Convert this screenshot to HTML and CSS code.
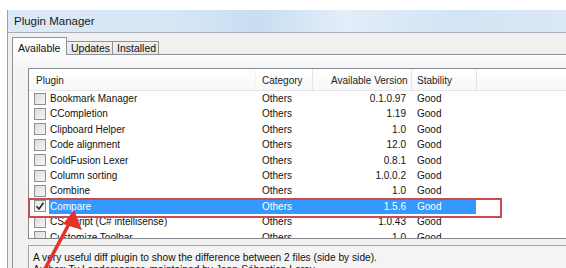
FILE: index.html
```html
<!DOCTYPE html>
<html>
<head>
<meta charset="utf-8">
<link rel="stylesheet" href="styles.css">
</head>
<body>
<div class="window">
  <div class="titlebar">Plugin Manager</div>
  <div class="body">
    <div class="tabs">
      <div class="tab active">Available</div>
      <div class="tab">Updates</div>
      <div class="tab">Installed</div>
    </div>
    <div class="panel">
      <div class="list">
        <div class="head">
          <div class="h h1">Plugin</div>
          <div class="h h2">Category</div>
          <div class="h h3">Available Version</div>
          <div class="h h4">Stability</div>
        </div>
        <div class="row"><span class="cb"></span><div class="cells"><span class="c1">Bookmark Manager</span><span class="c2">Others</span><span class="c3">0.1.0.97</span><span class="c4">Good</span></div></div>
        <div class="row"><span class="cb"></span><div class="cells"><span class="c1">CCompletion</span><span class="c2">Others</span><span class="c3">1.19</span><span class="c4">Good</span></div></div>
        <div class="row"><span class="cb"></span><div class="cells"><span class="c1">Clipboard Helper</span><span class="c2">Others</span><span class="c3">1.0</span><span class="c4">Good</span></div></div>
        <div class="row"><span class="cb"></span><div class="cells"><span class="c1">Code alignment</span><span class="c2">Others</span><span class="c3">12.0</span><span class="c4">Good</span></div></div>
        <div class="row"><span class="cb"></span><div class="cells"><span class="c1">ColdFusion Lexer</span><span class="c2">Others</span><span class="c3">0.8.1</span><span class="c4">Good</span></div></div>
        <div class="row"><span class="cb"></span><div class="cells"><span class="c1">Column sorting</span><span class="c2">Others</span><span class="c3">1.0.0.2</span><span class="c4">Good</span></div></div>
        <div class="row"><span class="cb"></span><div class="cells"><span class="c1">Combine</span><span class="c2">Others</span><span class="c3">1.0</span><span class="c4">Good</span></div></div>
        <div class="row sel"><span class="cb checked"><svg viewBox="0 0 12 12" width="12" height="12"><path d="M2.5 6.2 L5 9 L9.5 2.8" fill="none" stroke="#222" stroke-width="1.5"/></svg></span><div class="cells"><span class="c1">Compare</span><span class="c2">Others</span><span class="c3">1.5.6</span><span class="c4">Good</span></div></div>
        <div class="row"><span class="cb"></span><div class="cells"><span class="c1">CS-Script (C# intellisense)</span><span class="c2">Others</span><span class="c3">1.0.43</span><span class="c4">Good</span></div></div>
        <div class="row"><span class="cb"></span><div class="cells"><span class="c1">Customize Toolbar</span><span class="c2">Others</span><span class="c3">1.0</span><span class="c4">Good</span></div></div>
      </div>
      <div class="desc">A very useful diff plugin to show the difference between 2 files (side by side).<br>Author: Ty Landercasper, maintained by Jean-Sébastien Leroy</div>
    </div>
  </div>
  <div class="redbox"></div>
  <svg class="arrow" width="100" height="80" viewBox="0 0 100 80">
    <line x1="38" y1="80" x2="68" y2="24" stroke="#e8302a" stroke-width="3.5"/>
    <polygon points="73,10 81,30 62,24" fill="#e8302a"/>
  </svg>
</div>
</body>
</html>
```
FILE: styles.css
```css
html, body {
  margin: 0;
  padding: 0;
  background: #ffffff;
  overflow: hidden;
}
body {
  width: 566px;
  height: 268px;
  font-family: "Liberation Sans", Arial, sans-serif;
  font-size: 10px;
  color: #111;
}
.window {
  position: relative;
  margin-top: 10px;
  margin-left: 7px;
  height: 258px;
  width: 559px;
  border-left: 1px solid #9aa0a8;
  background: #f0f0f0;
  overflow: hidden;
}
.titlebar {
  height: 23px;
  box-sizing: border-box;
  padding-left: 6px;
  line-height: 23px;
  font-size: 11.5px;
  color: #1a1a1a;
  background: linear-gradient(90deg, #dce9f6 0%, #d6e6f5 30%, #c9ddf1 45%, #e2eef9 60%, #d3e4f4 80%, #dbe8f5 100%);
  border-bottom: 1px solid #a7b0ba;
}
.body {
  padding: 4px 0 0 4px;
}
.tabs {
  display: flex;
  align-items: flex-end;
  height: 17px;
  position: relative;
  z-index: 2;
}
.tab {
  height: 13px;
  box-sizing: border-box;
  border: 1px solid #8e9399;
  border-bottom: none;
  border-left: none;
  background: linear-gradient(#f2f2f2, #e4e4e4);
  line-height: 12px;
  padding: 0 0 0 4px;
  font-size: 10.5px;
}
.tab.active {
  height: 18px;
  margin-bottom: -1px;
  border-left: 1px solid #8e9399;
  background: #fcfcfc;
  width: 55px;
  padding: 4px 0 0 5px;
  line-height: 12px;
}
.tabs .tab:nth-child(2) { width: 46px; }
.tabs .tab:nth-child(3) { width: 46px; }
.panel {
  border-top: 1px solid #8e9399;
  border-left: 1px solid #8e9399;
  background: linear-gradient(#fbfbfb, #f3f3f3 20px, #f0f0f0);
  padding: 13px 0 0 15px;
  height: 220px;
  box-sizing: border-box;
}
.list {
  width: 620px;
  height: 171px;
  box-sizing: border-box;
  border: 1px solid #828790;
  background: #ffffff;
  overflow: hidden;
}
.head {
  display: flex;
  height: 22px;
  box-sizing: border-box;
  border-bottom: 1px solid #e5e5e5;
  background: linear-gradient(#ffffff, #f7f8f9);
  color: #222;
}
.h {
  box-sizing: border-box;
  line-height: 21px;
  padding-top: 1px;
  white-space: nowrap;
  overflow: hidden;
  border-right: 1px solid #e3e5e8;
}
.h1 { width: 227px; padding-left: 7px; border-right-color: #f4f5f6; }
.h2 { width: 57px; padding-left: 6px; }
.h3 { width: 99px; padding-left: 18px; }
.h4 { width: 65px; padding-left: 5px; }
.row {
  display: flex;
  align-items: center;
  height: 15.4px;
}
.cb {
  width: 12px;
  height: 12px;
  box-sizing: border-box;
  margin-left: 5px;
  margin-right: 3px;
  border: 1px solid #8f9091;
  background: linear-gradient(135deg, #dcdcdc, #f6f6f6);
  display: flex;
  flex: none;
}
.cb.checked { background: linear-gradient(135deg, #e6e6e6, #fbfbfb); }
.cb svg { display: block; margin: -1px; }
.cells {
  display: flex;
  align-items: center;
  height: 15.4px;
}
.cells span { display: block; line-height: 15.4px; white-space: nowrap; }
.c1 { width: 206px; padding-left: 1px; }
.c2 { width: 57px; padding-left: 6px; box-sizing: border-box; }
.c3 { width: 99px; padding-right: 6px; box-sizing: border-box; text-align: right; }
.c4 { width: 64px; padding-left: 5px; box-sizing: border-box; }
.row.sel .cells {
  background: #3399ff;
  color: #ffffff;
}
.desc {
  margin-top: 6px;
  width: 620px;
  height: 40px;
  box-sizing: border-box;
  border-top: 1px solid #a0a4a8;
  border-left: 1px solid #a0a4a8;
  background: #f4f4f4;
  padding: 6px 0 0 4px;
  line-height: 12px;
  font-size: 10.2px;
  color: #111;
}
.redbox {
  position: absolute;
  left: 20px;
  top: 188px;
  width: 474px;
  height: 20px;
  box-sizing: border-box;
  border: 2px solid #cc4a56;
}
.arrow {
  position: absolute;
  left: -7px;
  top: 190px;
}
```
